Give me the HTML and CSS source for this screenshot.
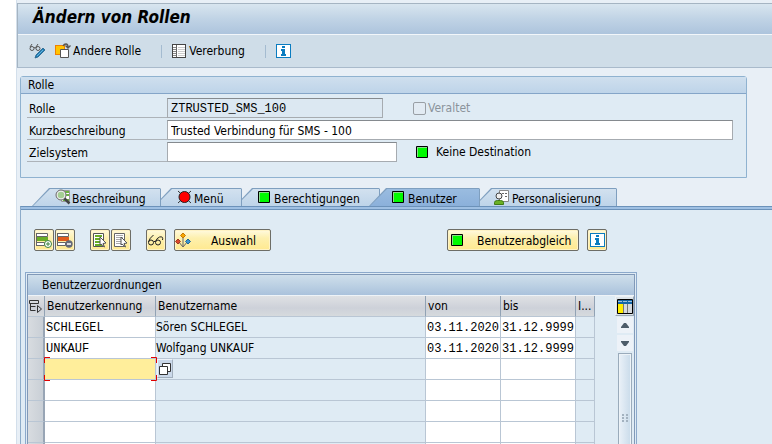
FILE: index.html
```html
<!DOCTYPE html>
<html lang="de">
<head>
<meta charset="utf-8">
<title>Ändern von Rollen</title>
<link rel="stylesheet" href="styles.css">
</head>
<body>
<svg class="defs" aria-hidden="true">
  <symbol id="led" viewBox="0 0 12 12"><rect width="12" height="12" rx="1" fill="#000"/><rect x="1" y="1" width="10" height="10" fill="#8bdc8b"/><rect x="2" y="2" width="9" height="9" fill="#00fa00"/></symbol>
  <symbol id="info" viewBox="0 0 15 14"><rect x=".5" y=".5" width="14" height="13" fill="#fff" stroke="#0a7cc0"/><path d="M6 2h3v2H6zM5 5h4v5h1v2H5v-2h1V7H5z" fill="#0a7cc0"/></symbol>
</svg>
<main class="window">
  <header class="top">
    <h1>Ändern von Rollen</h1>
    <nav class="toolbar">
      <button class="tool tool-edit" aria-label="Anzeigen/Ändern">
        <svg width="17" height="16" viewBox="0 0 17 16" fill="none"><path d="M1 4l2-3M7 4l2-3M5 5q1-1 2 0" stroke="#555"/><circle cx="3" cy="5.500" r="2" stroke="#555"/><circle cx="9" cy="5.500" r="2" stroke="#555"/><path d="M6 15l1-3 7-7 2 2-7 7z" fill="#1c7fb5" stroke="#27618a" stroke-width=".8"/><path d="M8 13l6-6" stroke="#6cb0da"/></svg>
      </button>
      <button class="tool">
        <svg width="16" height="16" viewBox="0 0 16 16" fill="none"><rect x=".5" y="2.500" width="9" height="9" fill="#ffc400" stroke="#f08000"/><path d="M5.500 6.500h8v8h-8z" fill="#fff" stroke="#555"/><path d="M8 3q1-2 3-2 2 0 2 3M10.500 2.500L13 5l2.500-2.500" stroke="#555" stroke-width="1.300"/></svg>
        Andere Rolle
      </button>
      <span class="sep"></span>
      <button class="tool">
        <svg width="14" height="14" viewBox="0 0 14 14"><rect x=".5" y=".5" width="13" height="13" fill="#fff" stroke="#444"/><path d="M4.500 1v12" stroke="#666"/><path d="M1 3.500h3M1 5.500h3M1 7.500h3M1 9.500h3M1 11.500h3" stroke="#888"/><path d="M6 3.500h7M6 5.500h7M6 7.500h7M6 9.500h7M6 11.500h7" stroke="#ccc"/></svg>
        Vererbung
      </button>
      <span class="sep"></span>
      <button class="tool tool-info" aria-label="Information"><svg width="15" height="14"><use href="#info"/></svg></button>
    </nav>
  </header>

  <section class="group">
    <h2>Rolle</h2>
    <div class="form">
      <label for="rolle">Rolle</label>
      <div class="line">
        <input class="field mono short locked" id="rolle" value="ZTRUSTED_SMS_100" readonly>
        <label class="check"><input type="checkbox" disabled>Veraltet</label>
      </div>
      <label for="kurz">Kurzbeschreibung</label>
      <div class="line"><input class="field" id="kurz" value="Trusted Verbindung für SMS - 100"></div>
      <label for="ziel">Zielsystem</label>
      <div class="line">
        <input class="field medium" id="ziel">
        <span class="dest"><svg width="12" height="12"><use href="#led"/></svg>Keine Destination</span>
      </div>
    </div>
  </section>

  <div class="tabs" role="tablist">
    <button class="tab t1" role="tab"><svg width="17" height="16" viewBox="0 0 17 16"><path d="M6.500 1.500h8v11h-8z" fill="#fff" stroke="#999"/><path d="M10 2h4v2h-4zM10 5h4v2h-4zM8 10h6v2H8z" fill="#6cb33f"/><circle cx="6" cy="6" r="4.300" fill="#a5ce94" stroke="#eee" stroke-width="2"/><circle cx="6" cy="6" r="5" fill="none" stroke="#666"/><path d="M9.500 9.500l5 5" stroke="#444" stroke-width="2.500"/></svg><span>Beschreibung</span></button>
    <button class="tab t2" role="tab"><svg width="15" height="14" viewBox="0 0 15 14"><path d="M1 1l13 12M14 1L1 13" stroke="#333"/><circle cx="7.500" cy="7" r="5.500" fill="#f00" stroke="#222"/></svg><span>Menü</span></button>
    <button class="tab t3" role="tab"><svg width="12" height="12"><use href="#led"/></svg><span>Berechtigungen</span></button>
    <button class="tab t4 active" role="tab" aria-selected="true"><svg width="12" height="12"><use href="#led"/></svg><span>Benutzer</span></button>
    <button class="tab t5" role="tab"><svg width="15" height="15" viewBox="0 0 15 15"><path d="M5.500.500h9v11h-9z" fill="#fff" stroke="#888"/><path d="M8 3h2v1H8zM11 3h2v1h-2zM11 6h2v1h-2z" fill="#666"/><circle cx="5" cy="6" r="3" fill="#eee" stroke="#444"/><path d="M.500 14.500v-2q0-2 3-2h3q3 0 3 2v2z" fill="#6ab023" stroke="#3f7a17"/></svg><span>Personalisierung</span></button>
  </div>

  <section class="page">
    <div class="actions">
      <div class="pair">
        <button class="btn icon" aria-label="Zeile einfügen"><svg width="18" height="17" viewBox="0 0 18 17" fill="none"><path d="M1.500 1.500h11v3h-11zM1.500 10.500h8v3h-8z" fill="#fff" stroke="#666"/><path d="M1 5h12v4H1z" fill="#69ad26"/><path d="M1.500 1v13" stroke="#666"/><circle cx="13" cy="12" r="3.500" fill="#fff" stroke="#3b8240"/><path d="M13 10v4M11 12h4" stroke="#3b8240"/></svg></button>
        <button class="btn icon" aria-label="Zeile löschen"><svg width="18" height="17" viewBox="0 0 18 17" fill="none"><path d="M1.500 1.500h11v3h-11zM1.500 10.500h8v3h-8z" fill="#fff" stroke="#666"/><path d="M1 5h12v4H1z" fill="#e05a1c"/><path d="M1.500 1v13" stroke="#666"/><circle cx="13" cy="12" r="3.700" fill="#666a78"/><path d="M11 12h4" stroke="#fff" stroke-width="1.500"/></svg></button>
      </div>
      <div class="pair">
        <button class="btn icon" aria-label="Alle markieren"><svg width="18" height="17" viewBox="0 0 18 17"><path d="M2.500 1.500h10v13h-10z" fill="#fff" stroke="#555"/><path d="M4 3h7v2H4zM4 6h7v2H4zM4 9h7v2H4zM4 12h7v2H4z" fill="#69ad26"/><path d="M9 5l6 6-3 .5 1.500 3.500L10 12l-1 1z" fill="#fff" stroke="#555"/></svg></button>
        <button class="btn icon" aria-label="Markierung löschen"><svg width="18" height="17" viewBox="0 0 18 17"><path d="M2.500 1.500h10v13h-10z" fill="#fff" stroke="#666"/><path d="M4 3.500h7M4 5.500h7M4 7.500h7M4 9.500h7M4 11.500h7" stroke="#aaa"/><path d="M9 5l6 6-3 .5 1.500 3.500L10 12l-1 1z" fill="#fff" stroke="#555"/></svg></button>
      </div>
      <button class="btn icon" aria-label="Anzeigen"><svg width="18" height="17" viewBox="0 0 18 17" fill="none" stroke="#222"><circle cx="4" cy="10.500" r="2.500"/><circle cx="11" cy="10.500" r="2.500"/><path d="M1.500 10q1-4 5-7M6.500 10l2-1M8.500 10q1-4 4-5 4-1 3 3"/></svg></button>
      <button class="btn select"><svg width="18" height="17" viewBox="0 0 18 17"><path d="M8 4v11M3 9l5 6 5-6" fill="none" stroke="#666"/><path d="M8 1l2.500 2.500L8 6 5.500 3.500z" fill="#f7a600" stroke="#c77800"/><path d="M3 7l2.500 2.500L3 12 .500 9.500z" fill="#d9482b" stroke="#9e3823"/><path d="M13 7l2.500 2.500L13 12l-2.500-2.500z" fill="#3c94ce" stroke="#1f6695"/></svg><span>Auswahl</span></button>
      <button class="btn compare"><svg width="12" height="12"><use href="#led"/></svg><span>Benutzerabgleich</span></button>
      <button class="btn icon" aria-label="Information"><svg width="15" height="14"><use href="#info"/></svg></button>
    </div>

    <div class="grid-frame">
      <div class="grid-inner">
        <h3>Benutzerzuordnungen</h3>
        <div class="grid-body">
          <table>
            <colgroup><col class="c-sel"><col class="c-id"><col><col class="c-date"><col class="c-date"><col class="c-ind"></colgroup>
            <thead>
              <tr>
                <th class="corner"><svg width="13" height="13" viewBox="0 0 13 13" fill="none" stroke="#333"><path d="M.500.500h9v3h-9zM1.500 3.500v7h5M1.500 6.500h5M8.500 5.500l4 3.500-4 3.500z"/></svg></th>
                <th>Benutzerkennung</th><th>Benutzername</th><th>von</th><th>bis</th><th>I...</th>
              </tr>
            </thead>
            <tbody>
              <tr><td class="sel"></td><td class="edit"><input aria-label="Benutzerkennung" value="SCHLEGEL"></td><td>Sören SCHLEGEL</td><td class="edit"><input aria-label="von" value="03.11.2020"></td><td class="edit"><input aria-label="bis" value="31.12.9999"></td><td></td></tr>
              <tr><td class="sel"></td><td class="edit"><input aria-label="Benutzerkennung" value="UNKAUF"></td><td>Wolfgang UNKAUF</td><td class="edit"><input aria-label="von" value="03.11.2020"></td><td class="edit"><input aria-label="bis" value="31.12.9999"></td><td></td></tr>
              <tr><td class="sel"></td><td class="edit current"><input aria-label="Benutzerkennung"><svg class="corners" width="113" height="24" viewBox="0 0 113 24" fill="none" stroke="#e00000"><path d="M.500 6V.500H6M107 .500h5.500V6M.500 18v5.500H6M107 23.500h5.500V18"/></svg><button class="help" aria-label="Wertehilfe"><svg width="12" height="12" viewBox="0 0 12 12" fill="#fff" stroke="#333"><path d="M3.500.500h8v8h-8z"/><path d="M.500 3.500h8v8h-8z"/></svg></button></td><td></td><td class="edit"></td><td class="edit"></td><td></td></tr>
              <tr><td class="sel"></td><td class="edit"></td><td></td><td class="edit"></td><td class="edit"></td><td></td></tr>
              <tr><td class="sel"></td><td class="edit"></td><td></td><td class="edit"></td><td class="edit"></td><td></td></tr>
              <tr><td class="sel"></td><td class="edit"></td><td></td><td class="edit"></td><td class="edit"></td><td></td></tr>
              <tr><td class="sel"></td><td class="edit"></td><td></td><td class="edit"></td><td class="edit"></td><td></td></tr>
            </tbody>
          </table>
          <div class="side">
            <button class="config" aria-label="Konfiguration"><svg width="16" height="15" viewBox="0 0 16 15"><path d="M.500.500h15v14H.500z" fill="#fff" stroke="#000"/><path d="M1 1h14v4H1z" fill="#1467a8"/><path d="M1 2.500h14" stroke="#fff" stroke-dasharray="4 1" stroke-width=".6"/><path d="M1 5h5v9H1z" fill="#ffed00"/><path d="M7 5h3v9H7zM11 5h4v9h-4z" fill="#d5d9dd"/><path d="M6.500 5v9M10.500 5v9" stroke="#777"/></svg></button>
            <button class="arrow" aria-label="Nach oben"><svg width="8" height="5"><path d="M0 5V4l3-4h2l3 4v1z" fill="#4d5c69"/></svg></button>
            <button class="arrow" aria-label="Nach unten"><svg width="8" height="5"><path d="M0 0v1l3 4h2l3-4V0z" fill="#4d5c69"/></svg></button>
            <div class="thumb"><svg width="6" height="8" fill="#a3b2c0"><path d="M0 0h2v2H0zM4 0h2v2H4zM0 3h2v2H0zM4 3h2v2H4zM0 6h2v2H0zM4 6h2v2H4z"/></svg></div>
          </div>
        </div>
      </div>
    </div>
  </section>
</main>
</body>
</html>
```
FILE: styles.css
```css
* { box-sizing: border-box; }
body {
  margin: 0;
  height: 100vh;
  overflow: hidden;
  background: #fff;
  color: #000;
  font: 12px/16px "DejaVu Sans Condensed", "DejaVu Sans", sans-serif;
}
button, input { font: inherit; color: inherit; margin: 0; padding: 0; }
button { border: 0; background: none; }
svg { display: block; flex: none; }
h1, h2, h3 { margin: 0; font-weight: normal; }
.defs { position: absolute; width: 0; height: 0; }

.window {
  display: flex;
  flex-direction: column;
  height: 100vh;
  overflow: hidden;
  margin-left: 16px;
  padding-top: 3px;
  border-left: 1px solid #d3dfeb;
  background: #e8eff6;
}
.top { flex: none; border: 1px solid #a5b4c2; border-right: 0; border-bottom: 1px solid #a9bacb; background: #cfdde8; }
h1 {
  height: 31px;
  padding-left: 15px;
  border-bottom: 1px solid #f2f6fa;
  background: linear-gradient(#d8e5ef, #c0d3e5 50%, #adc4dd);
  font: italic bold 17px/26px "DejaVu Sans Condensed", "DejaVu Sans", sans-serif;
}
.toolbar { display: flex; align-items: center; height: 32px; padding-left: 11px; }
.tool { display: flex; align-items: center; gap: 2px; height: 20px; }
.tool-edit { margin-right: 9px; }
.sep { width: 1px; height: 13px; margin: 0 10px 0 20px; background: #a4bbd0; }
.sep + .tool { gap: 3px; }

.group {
  flex: none;
  margin: 8px 25px 0 3px;
  border: 1px solid #8fb2d0;
  border-radius: 3px 3px 0 0;
  background: #dfebf4;
}
h2 { height: 17px; padding-left: 7px; border-bottom: 1px solid #84a5c8; background: linear-gradient(#cfdfee, #bed4e9); font-size: 12px; line-height: 16px; }
.form { display: grid; grid-template-columns: 140px 1fr; row-gap: 2px; padding: 4px 13px 15px 6px; }
.form > label { height: 20px; padding-left: 2px; border-bottom: 1px solid #adb3b9; line-height: 22px; }
.line { display: flex; align-items: center; height: 20px; }
.field { width: 100%; height: 20px; padding: 1px 3px 0; border: 1px solid #a6abb0; border-top-color: #858a8f; border-radius: 0; background: #fff; outline: 0; }
.mono { font-family: "Liberation Mono", monospace; }
.short { width: 216px; }
.medium { width: 230px; }
.locked { background: #dce8f2; }
.check { display: flex; align-items: center; gap: 2px; margin-left: 30px; color: #8b939b; }
.check input { appearance: none; width: 13px; height: 13px; border: 1px solid #999fa5; border-radius: 2px; background: #e2ebf3; }
.dest { display: flex; align-items: center; gap: 8px; margin-left: 19px; white-space: nowrap; }

.tabs { display: flex; flex: none; height: 18px; margin-top: 10px; padding-left: 15px; isolation: isolate; }
.tab {
  --slant: 17px;
  --fill: linear-gradient(#d2e1ef, #bed4e9);
  position: relative;
  display: flex;
  align-items: center;
  gap: 4px;
  height: 18px;
  padding-left: 23px;
  margin-left: -7px;
  background: #7f9fbf;
  clip-path: polygon(var(--slant) 0, calc(100% - 1px) 0, 100% 1px, 100% 100%, 0 100%);
  white-space: nowrap;
}
.tab::before {
  content: "";
  position: absolute;
  inset: 1px 1px 0 1px;
  z-index: -1;
  background: var(--fill);
  clip-path: polygon(var(--slant) 0, 100% 0, 100% 100%, 0 100%);
}
.tab span { padding-top: 3px; }
.t1 { width: 129px; margin-left: 0; z-index: 5; gap: 0; }
.t2 { width: 88px; z-index: 4; gap: 2px; }
.t3 { width: 145px; z-index: 3; }
.t4 { width: 111px; margin-left: -11px; z-index: 6; }
.t5 { width: 143px; margin-left: -6px; padding-left: 20px; z-index: 2; gap: 3px; }
.active { --fill: linear-gradient(#9abce0, #8bb0da); }

.page {
  flex: 1;
  min-height: 0;
  overflow: hidden;
  margin-left: 3px;
  border-top: 1px solid #6c92ba;
  border-left: 1px solid #8cabc9;
  background: linear-gradient(#9fc0e3 2px, #6c92ba 2px, #6c92ba 3px, #dfebf4 3px);
  padding: 22px 4px 0;
}
.actions { display: flex; align-items: center; gap: 15px; padding-left: 9px; }
.pair { display: flex; gap: 1px; }
.btn {
  display: flex;
  align-items: center;
  height: 22px;
  border: 1px solid #6d6d66;
  border-radius: 2px;
  background: linear-gradient(#fffae0, #fdf0ae 40%, #ffe98f);
  box-shadow: inset 0 0 0 1px #fff3c4;
}
.icon { justify-content: center; width: 20px; }
.btn span { padding-top: 2px; }
.select { width: 97px; margin-left: -7px; }
.select span { flex: 1; padding-left: 4px; }
.compare { width: 132px; margin: 0 -7px 0 161px; padding-left: 3px; gap: 14px; }

.grid-frame { width: 612px; max-width: 100%; margin-top: 21px; padding: 1px; border: 1px solid #8ca9cb; }
.grid-inner { border: 1px solid #8199b8; }
h3 { height: 21px; padding-left: 14px; border-bottom: 1px solid #eef3f8; background: linear-gradient(#cfdfeb, #aac2dc); font-size: 12px; line-height: 20px; }
.grid-body { display: flex; align-items: stretch; justify-content: space-between; }
table { flex: 1; table-layout: fixed; border-collapse: separate; border-spacing: 0; width: 100%; }
.c-sel { width: 17px; }
.c-id { width: 111px; }
.c-date { width: 75px; }
.c-ind { width: 19px; }
th, td { position: relative; height: 21px; padding: 0 1px; border-right: 1px solid #b9c6d4; border-bottom: 1px solid #b9c6d4; text-align: left; font-weight: normal; white-space: nowrap; line-height: 20px; }
td { padding-left: 0; }
th { padding: 0 2px; border-right-color: #91a2b4; background: linear-gradient(#dfe1e4, #cdd1d9 60%, #d6dadd); }
td:not(.edit):not(.sel) { padding-top: 1px; line-height: 19px; }
.corner { padding: 0 1px; }
.sel { background: linear-gradient(90deg, #d8dce0, #c9cfd6); border-right: 2px solid #98a5b5; }
.edit { padding-left: 1px; background: #fff; }
td input { display: block; width: 100%; height: 20px; padding-top: 1px; border: 0; outline: 0; background: none; font-family: "Liberation Mono", monospace; }
.current { background: #ffee9b; z-index: 1; }
.corners { position: absolute; left: -1px; top: -2px; }
.help { position: absolute; left: 112px; top: 0; width: 16px; height: 19px; padding: 0 1px; border: 1px solid #a2afbd; border-top-color: #eef3f8; border-left-color: #eef3f8; background: #cbd9ea; }

.side { display: flex; flex-direction: column; align-items: center; width: 19px; margin-left: 20px; }
.config { display: flex; align-items: center; justify-content: center; width: 19px; height: 20px; margin-bottom: 1px; border: 1px solid #9ba8b4; border-top-color: #eef2f5; border-left-color: #eef2f5; background: #dce3e9; }
.arrow { display: flex; align-items: center; justify-content: center; width: 16px; height: 16px; margin-bottom: 2px; background: #edf2f8; }
.thumb { display: flex; justify-content: center; width: 14px; flex: 1; padding-top: 60px; border: 1px solid #9aabbb; background: linear-gradient(90deg, #eaf1f8, #c9dbea); box-shadow: inset 0 0 0 1px #edf3f8; }
```
